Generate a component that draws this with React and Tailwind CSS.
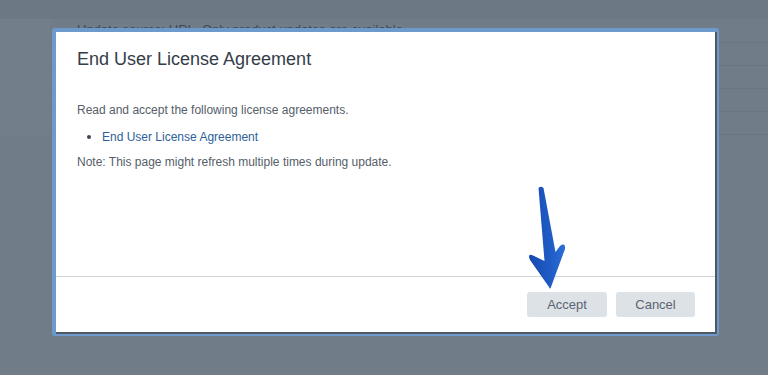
import React from 'react';

const rows = [1, 2, 3, 4];

const Arrow = () => (
  <svg
    className="absolute left-[525px] top-[184px]"
    width="46"
    height="108"
    viewBox="525 184 46 108"
  >
    <defs>
      <linearGradient id="arrowFill" x1="0" y1="0" x2="1" y2="0">
        <stop offset="0" stopColor="#1749ad" />
        <stop offset="0.6" stopColor="#1f5cc6" />
        <stop offset="1" stopColor="#2d6dd6" />
      </linearGradient>
    </defs>
    <path
      d="M538.5,188 Q541,185.5 543.5,188 L555.5,252 L560,246 Q565.5,242 565,249 L551,287 Q550,290 549,287 L530,260 Q527,253 533,255.5 L544.5,261 Z"
      fill="url(#arrowFill)"
    />
  </svg>
);

const App = () => {
  return (
    <div className="relative w-full h-[375px] overflow-hidden bg-[#717c89] font-['Liberation_Sans',Arial,sans-serif]">
      {/* dimmed page behind the dialog */}
      <div className="h-[19px] bg-[#6d7885]" />
      <div className="flex">
        <div className="w-[50px] h-[116px] bg-[#737e8b]" />
        <div className="flex-1">
          <div className="h-[24px] pl-[27px] pt-[2px] text-[13px] leading-[17px] text-[#3e4956] border-b border-[#6a7582]">
            Update source: URL. Only product updates are available.
          </div>
          {rows.map((r) => (
            <div key={r} className="h-[23px] border-b border-[#6a7582]" />
          ))}
        </div>
      </div>

      {/* dialog */}
      <div className="absolute left-[52px] top-[28px] w-[667px] h-[308px] rounded-[3px] bg-[#6d99cc] pl-[4px] pt-[4px] pr-[2px] pb-[2px]">
        <div className="flex flex-col h-full bg-white border-r-2 border-b-2 border-[#4f5761]">
          <div className="px-[21px] pt-[17px] text-[18px] leading-[21px] text-[#343d48]">
            End User License Agreement
          </div>
          <div className="flex-1 px-[21px] pt-[32px] text-[12px] leading-[16px] text-[#555e69]">
            <p>Read and accept the following license agreements.</p>
            <ul className="mt-[11px] pl-[10px] flex flex-col">
              <li className="flex items-center gap-[11px]">
                <span className="w-[4px] h-[4px] rounded-full bg-[#3d4651]" />
                <span className="text-[#2f5f9a]">End User License Agreement</span>
              </li>
            </ul>
            <p className="mt-[9px]">Note: This page might refresh multiple times during update.</p>
          </div>
          <div className="border-t border-[#cdd4da] flex justify-end gap-[9px] pt-[15px] pb-[15px] pr-[20px]">
            <button className="w-[80px] h-[25px] rounded-[3px] bg-[#dde2e7] text-[13px] text-[#5a6470]">
              Accept
            </button>
            <button className="w-[79px] h-[25px] rounded-[3px] bg-[#dde2e7] text-[13px] text-[#5a6470]">
              Cancel
            </button>
          </div>
        </div>
      </div>

      <Arrow />
    </div>
  );
};

export default App;
